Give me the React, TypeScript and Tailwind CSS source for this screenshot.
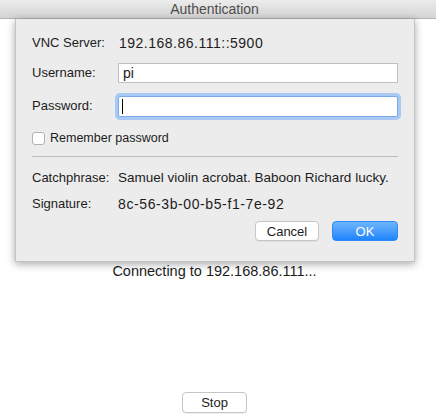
import React from "react";

const font = { fontFamily: '"Liberation Sans", Arial, Helvetica, sans-serif' };

const Row: React.FC<{ label: string; children: React.ReactNode; className?: string }> = ({ label, children, className }) => (
    <div className={`flex items-center h-[20px] ${className || ""}`}>
        <div className="w-[86px] shrink-0">{label}</div>
        <div className="flex-1 min-w-0 whitespace-nowrap">{children}</div>
    </div>
);

export default function App() {
    return (
        <div style={font} className="w-[436px] h-[419px] bg-white flex flex-col text-[13px] text-[#1c1c1c] overflow-hidden">
            {/* Window title bar */}
            <div className="h-[19px] shrink-0 flex items-center justify-center pr-[7px] bg-gradient-to-b from-[#ececec] to-[#d4d4d4] border-b border-[#b3b3b3] text-[#4d4d4d] text-[14px]">
                Authentication
            </div>

            {/* Sheet */}
            <div className="mx-[15px] w-[400px] shrink-0 bg-[#ececec] shadow-[0_2px_8px_rgba(0,0,0,0.35)] border-x border-b border-[#c4c4c4] px-[16px] pt-[14px] pb-[20px]">
                <div className="flex items-center h-[20px]">
                    <div className="w-[87px] shrink-0">VNC Server:</div>
                    <div className="text-[14px] tracking-[0.5px]">192.168.86.111::5900</div>
                </div>

                <Row label="Username:" className="mt-[10px]">
                    <div className="h-[20px] bg-white border border-[#c0c0c0] flex items-center px-[4px] text-[14px]">pi</div>
                </Row>

                <Row label="Password:" className="mt-[13px]">
                    <div className="h-[21px] bg-white border border-[#7ea9e8] rounded-[2px] ring-[3px] ring-[#a9c9f5] flex items-center px-[3px]">
                        <div className="w-px h-[15px] bg-black" />
                    </div>
                </Row>

                <div className="flex items-center h-[20px] mt-[12px]">
                    <div className="w-[13px] h-[13px] bg-white border border-[#b2b2b2] rounded-[3px]" />
                    <span className="ml-[5px] text-[12.5px]">Remember password</span>
                </div>

                <div className="h-px bg-[#bdbdbd] mt-[8px]" />

                <Row label="Catchphrase:" className="mt-[11px]">
                    <span className="text-[13.5px]">Samuel violin acrobat. Baboon Richard lucky.</span>
                </Row>

                <Row label="Signature:" className="mt-[6px]">
                    <span className="text-[14px] tracking-[0.6px]">8c-56-3b-00-b5-f1-7e-92</span>
                </Row>

                <div className="flex justify-end gap-[13px] mt-[7px]">
                    <button className="w-[64px] h-[20px] bg-white border border-[#c6c6c6] rounded-[4px] shadow-[0_1px_0_rgba(0,0,0,0.06)] leading-none">
                        Cancel
                    </button>
                    <button className="w-[66px] h-[20px] rounded-[4px] bg-gradient-to-b from-[#6db5fb] to-[#1b84fb] text-white border border-[#2f8cf5] leading-none">
                        OK
                    </button>
                </div>
            </div>

            <div className="h-[20px] flex items-center justify-center pr-[7px] shrink-0 text-[14.5px]">
                Connecting to 192.168.86.111...
            </div>

            <div className="mt-auto pb-[6px] pr-[7px] flex justify-center">
                <button className="w-[65px] h-[21px] bg-white border border-[#c6c6c6] rounded-[4px] shadow-[0_1px_0_rgba(0,0,0,0.06)] leading-none">
                    Stop
                </button>
            </div>
        </div>
    );
}
